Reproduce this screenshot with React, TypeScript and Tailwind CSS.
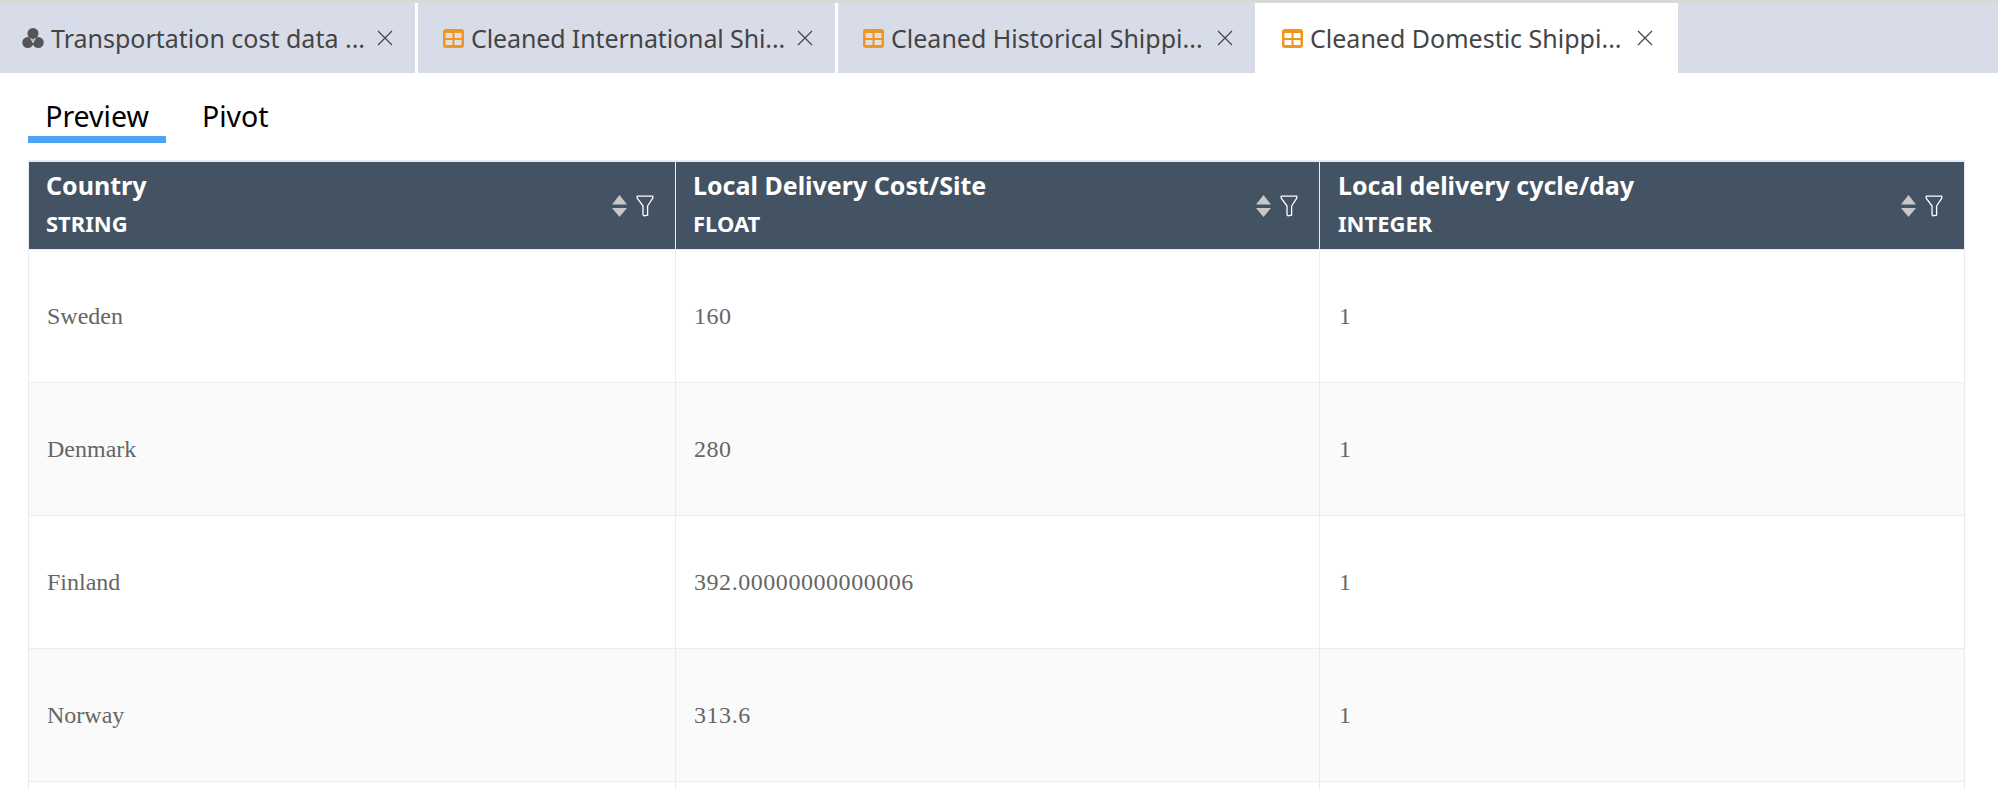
const uiFont = "font-['Noto_Sans',sans-serif]";

const tabs = [
  { label: "Transportation cost data ...", icon: "group", box: "w-[415px] pl-[22px] pr-[22px]" },
  { label: "Cleaned International Shi...", icon: "table", box: "w-[420px] border-l-[3px] border-white pl-[25px] pr-[22px] tracking-[-0.12px]" },
  { label: "Cleaned Historical Shippi...", icon: "table", box: "w-[420px] border-l-[3px] border-white pl-[25px] pr-[22px]" },
  { label: "Cleaned Domestic Shippi...", icon: "table", box: "w-[423px] bg-white pl-[27px] pr-[25px]", active: true },
];

const columns = [
  { name: "Country", type: "STRING", box: "pl-[17px] border-r" },
  { name: "Local Delivery Cost/Site", type: "FLOAT", box: "pl-[17px] border-r" },
  { name: "Local delivery cycle/day", type: "INTEGER", box: "pl-[18px]" },
];

const rows = [
  ["Sweden", "160", "1"],
  ["Denmark", "280", "1"],
  ["Finland", "392.00000000000006", "1"],
  ["Norway", "313.6", "1"],
];

const cellBox = [
  "border-r border-[#ececf0] pl-[18px]",
  "border-r border-[#ececf0] pl-[18px] tracking-[0.55px]",
  "pl-[19px]",
];

function GroupIcon() {
  return (
    <svg width="22" height="22" viewBox="0 0 22 22" className="shrink-0">
      <circle cx="11" cy="6.5" r="5.5" fill="#555555" />
      <circle cx="5.8" cy="15.5" r="5.5" fill="#555555" />
      <circle cx="16.2" cy="15.5" r="5.5" fill="#555555" />
      <path d="M11 12.5v3M8.5 11l2.5 4.5 2.5-4.5" stroke="#d8dce8" strokeWidth="1" fill="none" />
    </svg>
  );
}

function TableIcon({ active }: { active?: boolean }) {
  const cell = active ? "#ffffff" : "#dfe0e4";
  return (
    <svg width="21" height="19" viewBox="0 0 21 19" className="shrink-0">
      <rect width="21" height="19" rx="3" fill="#f0961e" />
      <rect x="2.5" y="4" width="7" height="5" fill={cell} />
      <rect x="11.5" y="4" width="7" height="5" fill={cell} />
      <rect x="2.5" y="11" width="7" height="5" fill={cell} />
      <rect x="11.5" y="11" width="7" height="5" fill={cell} />
    </svg>
  );
}

function CloseIcon() {
  return (
    <svg width="16" height="16" viewBox="0 0 16 16" className="shrink-0">
      <path d="M1 1l14 14M15 1L1 15" stroke="#444444" strokeWidth="1.2" />
    </svg>
  );
}

function SortFilter() {
  return (
    <div className="flex items-center gap-[9px]">
      <svg width="15" height="22" viewBox="0 0 15 22">
        <path d="M7.5 0L15 9.5H0z" fill="#c8c8c8" />
        <path d="M0 13h15L7.5 22z" fill="#c8c8c8" />
      </svg>
      <svg width="18" height="22" viewBox="0 0 18 22">
        <path
          d="M1.2 1.2h15.6v2L11.6 11v9.2l-3.6.6-1-1V11L1.2 3.2z"
          fill="none"
          stroke="#ffffff"
          strokeWidth="1.3"
          strokeLinejoin="round"
        />
      </svg>
    </div>
  );
}

export default function App() {
  return (
    <div className={`h-[790px] overflow-hidden bg-white ${uiFont}`}>
      <div className="flex h-[73px] border-t-[3px] border-[#d9d9d9] bg-[#d8dce8]">
        {tabs.map((t) => (
          <div key={t.label} className={`flex h-[70px] items-center ${t.box}`}>
            {t.icon === "group" ? <GroupIcon /> : <TableIcon active={t.active} />}
            <span className="ml-[7px] flex-1 whitespace-nowrap text-[25px] leading-[34px] text-[#444444]">
              {t.label}
            </span>
            <CloseIcon />
          </div>
        ))}
      </div>

      <div className="ml-[28px] mt-[17px] flex h-[53px] text-[28.5px] leading-[52px] text-black">
        <div className="h-[53px] w-[138px] border-b-[7px] border-[#4fa3f7] text-center">Preview</div>
        <div className="ml-[36px]">Pivot</div>
      </div>

      <div className="ml-[28px] mt-[17px] w-[1937px] border-x border-t-2 border-[#e8ebf0]">
        <div className="grid h-[88px] grid-cols-[647px_644px_1fr] border-b border-[#e8ebf0] bg-[#435363] text-white">
          {columns.map((c) => (
            <div
              key={c.name}
              className={`flex items-center justify-between border-[#e8ebf0] pr-[21px] ${c.box}`}
            >
              <div className="font-bold">
                <div className="text-[25px] leading-[34px]">{c.name}</div>
                <div className="text-[22px] leading-[42px]">{c.type}</div>
              </div>
              <SortFilter />
            </div>
          ))}
        </div>
        {rows.map((r, idx) => (
          <div
            key={r[0]}
            className={`grid h-[133px] grid-cols-[647px_644px_1fr] border-b border-[#ececf0] ${
              idx % 2 === 1 ? "bg-[#fafafa]" : "bg-white"
            }`}
          >
            {r.map((v, i) => (
              <div
                key={i}
                className={`flex items-center font-['Liberation_Serif',serif] text-[24px] text-[#666666] ${cellBox[i]}`}
              >
                {v}
              </div>
            ))}
          </div>
        ))}
        <div className="grid h-[40px] grid-cols-[647px_644px_1fr]">
          <div className="border-r border-[#ececf0]" />
          <div className="border-r border-[#ececf0]" />
          <div />
        </div>
      </div>
    </div>
  );
}
